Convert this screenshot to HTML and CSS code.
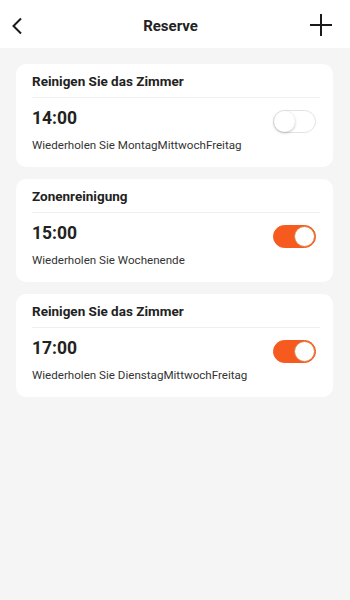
FILE: index.html
```html
<!DOCTYPE html>
<html lang="de">
<head>
<meta charset="utf-8">
<link rel="stylesheet" href="styles.css">
</head>
<body>
<header class="topbar">
  <svg class="back" width="12" height="18" viewBox="0 0 12 18"><path d="M10 1.5 L2.5 9 L10 16.5" fill="none" stroke="#1a1a1a" stroke-width="2"/></svg>
  <h1 class="title">Reserve</h1>
  <svg class="plus" width="22" height="22" viewBox="0 0 22 22"><path d="M11 0 V22 M0 11 H22" fill="none" stroke="#1a1a1a" stroke-width="2"/></svg>
</header>
<main class="list">
  <section class="card">
    <div class="card-title">Reinigen Sie das Zimmer</div>
    <div class="row">
      <div class="time">14:00</div>
      <div class="toggle"><span class="knob"></span></div>
    </div>
    <div class="repeat">Wiederholen Sie MontagMittwochFreitag</div>
  </section>
  <section class="card">
    <div class="card-title">Zonenreinigung</div>
    <div class="row">
      <div class="time">15:00</div>
      <div class="toggle on"><span class="knob"></span></div>
    </div>
    <div class="repeat">Wiederholen Sie Wochenende</div>
  </section>
  <section class="card">
    <div class="card-title">Reinigen Sie das Zimmer</div>
    <div class="row">
      <div class="time">17:00</div>
      <div class="toggle on"><span class="knob"></span></div>
    </div>
    <div class="repeat">Wiederholen Sie DienstagMittwochFreitag</div>
  </section>
</main>
</body>
</html>
```
FILE: styles.css
```css
* { box-sizing: border-box; }
html, body { margin: 0; padding: 0; }
body {
  width: 350px;
  height: 600px;
  background: #f5f5f5;
  font-family: Roboto, "Liberation Sans", sans-serif;
  color: #222;
}
.topbar {
  height: 48px;
  background: #fff;
  display: flex;
  align-items: center;
  justify-content: space-between;
  padding: 3px 18px 0 11px;
}
.back { display: block; margin-top: 0; }
.plus { display: block; margin-top: -2px; }
.title {
  margin: 0;
  font-size: 15px;
  font-weight: 700;
  color: #222;
  flex: 1;
  text-align: center;
  padding-left: 8px;
}
.list {
  padding: 16px 17px 0 16px;
  display: flex;
  flex-direction: column;
  gap: 12px;
}
.card {
  background: #fff;
  border-radius: 10px;
  padding: 8px 13px 14px 16px;
  height: 103px;
}
.card-title {
  font-size: 13.5px;
  font-weight: 700;
  line-height: 18px;
  padding-bottom: 7px;
  border-bottom: 1px solid #efefef;
  color: #222;
}
.row {
  display: flex;
  align-items: center;
  justify-content: space-between;
  margin-top: 8px;
  height: 24px;
}
.time {
  font-size: 17.5px;
  font-weight: 700;
  line-height: 24px;
  color: #222;
}
.toggle {
  width: 43px;
  height: 23px;
  border-radius: 12px;
  background: #fff;
  border: 1px solid #e3e3e3;
  position: relative;
  margin-right: 4px;
  margin-top: 7px;
}
.knob {
  position: absolute;
  top: 0;
  left: 0;
  width: 21px;
  height: 21px;
  border-radius: 50%;
  background: #fff;
  box-shadow: 0 1px 3px rgba(0,0,0,0.25);
}
.toggle.on {
  background: #f65a1f;
  border-color: #f65a1f;
}
.toggle.on .knob {
  left: auto;
  right: 0;
  box-shadow: none;
  border: 1px solid #d9823f;
}
.repeat {
  font-size: 11.6px;
  line-height: 16px;
  margin-top: 7px;
  color: #333;
}
```
